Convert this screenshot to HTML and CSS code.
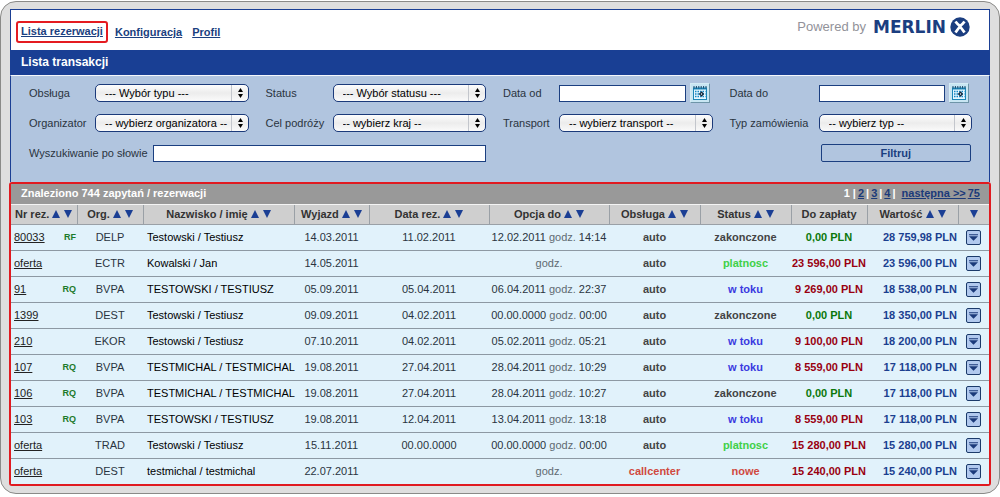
FILE: index.html
```html
<!DOCTYPE html>
<html lang="pl">
<head>
<meta charset="utf-8">
<title>Lista transakcji</title>
<link rel="stylesheet" href="styles.css">
</head>
<body>
<svg class="defs" aria-hidden="true">
  <symbol id="sort" viewBox="0 0 20 8"><path d="M4 0L8 8H0zM12 0h8l-4 8z"/></symbol>
  <symbol id="down" viewBox="0 0 8 8"><path d="M0 0h8L4 8z"/></symbol>
  <symbol id="updown" viewBox="0 0 5 10"><path d="M2.5 0L5 4H0zM0 6h5l-2.500 4z"/></symbol>
  <symbol id="expand" viewBox="0 0 10 7"><path d="M0 0h10v1H0zM0 2h10L5 7z"/></symbol>
  <symbol id="calendar" viewBox="0 0 16 16">
    <rect x="1" y="2.500" width="14" height="12.500" fill="#1b86b8"/>
    <path d="M2 1v2.500M4.400 1v2.500M6.800 1v2.500M9.200 1v2.500M11.600 1v2.500M14 1v2.500" stroke="#17486b" stroke-width="1"/>
    <rect x="2" y="4.500" width="12" height="9.500" fill="#e6f7ff"/>
    <path d="M3 6.500h10.500M3 9h10.500M3 11.500h10.500" stroke="#1487c4" stroke-width="1.500" stroke-dasharray="1.500 1"/>
    <path d="M9.500 6.300L12.200 9l-2.700 2.700L6.800 9z" fill="#12283c"/><circle cx="9.500" cy="9" r=".7" fill="#fff"/>
  </symbol>
</svg>
<div class="frame">
  <header class="top">
    <nav class="nav">
      <a class="nav-link current" href="#">Lista rezerwacji</a>
      <a class="nav-link" href="#">Konfiguracja</a>
      <a class="nav-link" href="#">Profil</a>
    </nav>
    <div class="brand">
      <span class="powered">Powered by</span>
      <span class="logo">MERLIN</span>
      <svg class="logo-mark" viewBox="0 0 20 20" aria-hidden="true"><circle cx="10" cy="10" r="9.700" fill="#1b3e80"/><path d="M5.500 4.500Q8 8 10 9Q12 8 14.500 4.500M5.500 15.500Q8 12 10 9.500Q12 12 14.500 15.500" fill="none" stroke="#fff" stroke-width="2.800"/></svg>
    </div>
  </header>
  <h1 class="title">Lista transakcji</h1>
  <form class="filters">
    <label for="typ">Obsługa</label>
    <div class="select"><select id="typ"><option>--- Wybór typu ---</option></select><svg><use href="#updown"/></svg></div>
    <label for="status">Status</label>
    <div class="select"><select id="status"><option>--- Wybór statusu ---</option></select><svg><use href="#updown"/></svg></div>
    <label for="od">Data od</label>
    <div class="date"><input class="text" id="od" type="text"><button class="cal" type="button" aria-label="Kalendarz"><svg><use href="#calendar"/></svg></button></div>
    <label for="do">Data do</label>
    <div class="date"><input class="text" id="do" type="text"><button class="cal" type="button" aria-label="Kalendarz"><svg><use href="#calendar"/></svg></button></div>

    <label for="org">Organizator</label>
    <div class="select"><select id="org"><option>-- wybierz organizatora --</option></select><svg><use href="#updown"/></svg></div>
    <label for="kraj">Cel podróży</label>
    <div class="select"><select id="kraj"><option>-- wybierz kraj --</option></select><svg><use href="#updown"/></svg></div>
    <label for="transport">Transport</label>
    <div class="select"><select id="transport"><option>-- wybierz transport --</option></select><svg><use href="#updown"/></svg></div>
    <label for="zam">Typ zamówienia</label>
    <div class="select"><select id="zam"><option>-- wybierz typ --</option></select><svg><use href="#updown"/></svg></div>

    <div class="search"><label for="slowo">Wyszukiwanie po słowie</label><input class="text" id="slowo" type="text"></div>
    <button class="submit" type="submit">Filtruj</button>
  </form>
  <section class="results">
    <div class="bar">
      <h2 class="found">Znaleziono 744 zapytań / rezerwacji</h2>
      <nav class="pages"><span>1 |</span> <a href="#">2</a><span>|</span><a href="#">3</a><span>|</span><a href="#">4</a><span>|</span> <a class="next" href="#">następna &gt;&gt;</a> <a href="#">75</a></nav>
    </div>
    <table class="list">
      <colgroup><col class="c-nr"><col class="c-org"><col class="c-name"><col class="c-dep"><col class="c-date"><col class="c-date"><col class="c-state"><col class="c-state"><col class="c-pay"><col class="c-state"><col class="c-more"></colgroup>
      <thead>
        <tr><th>Nr rez. <svg class="sort"><use href="#sort"/></svg></th><th>Org. <svg class="sort"><use href="#sort"/></svg></th><th>Nazwisko / imię <svg class="sort"><use href="#sort"/></svg></th><th>Wyjazd <svg class="sort"><use href="#sort"/></svg></th><th>Data rez. <svg class="sort"><use href="#sort"/></svg></th><th>Opcja do <svg class="sort"><use href="#sort"/></svg></th><th>Obsługa <svg class="sort"><use href="#sort"/></svg></th><th>Status <svg class="sort"><use href="#sort"/></svg></th><th>Do zapłaty</th><th>Wartość <svg class="sort"><use href="#sort"/></svg></th><th><svg class="down"><use href="#down"/></svg></th></tr>
      </thead>
      <tbody>
        <tr><td class="nr"><a href="#">80033</a><b class="flag">RF</b></td><td>DELP</td><td class="name">Testowski / Testiusz</td><td>14.03.2011</td><td>11.02.2011</td><td>12.02.2011 <i>godz.</i> 14:14</td><td class="bold">auto</td><td class="bold">zakonczone</td><td class="bold paid">0,00 PLN</td><td class="value">28 759,98 PLN</td><td><button class="more" aria-label="Więcej"><svg><use href="#expand"/></svg></button></td></tr>
        <tr><td class="nr"><a href="#">oferta</a></td><td>ECTR</td><td class="name">Kowalski / Jan</td><td>14.05.2011</td><td></td><td><i>godz.</i></td><td class="bold">auto</td><td class="bold payable">platnosc</td><td class="bold due">23 596,00 PLN</td><td class="value">23 596,00 PLN</td><td><button class="more" aria-label="Więcej"><svg><use href="#expand"/></svg></button></td></tr>
        <tr><td class="nr"><a href="#">91</a><b class="flag">RQ</b></td><td>BVPA</td><td class="name">TESTOWSKI / TESTIUSZ</td><td>05.09.2011</td><td>05.04.2011</td><td>06.04.2011 <i>godz.</i> 22:37</td><td class="bold">auto</td><td class="bold open">w toku</td><td class="bold due">9 269,00 PLN</td><td class="value">18 538,00 PLN</td><td><button class="more" aria-label="Więcej"><svg><use href="#expand"/></svg></button></td></tr>
        <tr><td class="nr"><a href="#">1399</a></td><td>DEST</td><td class="name">Testowski / Testiusz</td><td>09.09.2011</td><td>04.02.2011</td><td>00.00.0000 <i>godz.</i> 00:00</td><td class="bold">auto</td><td class="bold">zakonczone</td><td class="bold paid">0,00 PLN</td><td class="value">18 350,00 PLN</td><td><button class="more" aria-label="Więcej"><svg><use href="#expand"/></svg></button></td></tr>
        <tr><td class="nr"><a href="#">210</a></td><td>EKOR</td><td class="name">Testowski / Testiusz</td><td>07.10.2011</td><td>04.02.2011</td><td>05.02.2011 <i>godz.</i> 05:21</td><td class="bold">auto</td><td class="bold open">w toku</td><td class="bold due">9 100,00 PLN</td><td class="value">18 200,00 PLN</td><td><button class="more" aria-label="Więcej"><svg><use href="#expand"/></svg></button></td></tr>
        <tr><td class="nr"><a href="#">107</a><b class="flag">RQ</b></td><td>BVPA</td><td class="name">TESTMICHAL / TESTMICHAL</td><td>19.08.2011</td><td>27.04.2011</td><td>28.04.2011 <i>godz.</i> 10:29</td><td class="bold">auto</td><td class="bold open">w toku</td><td class="bold due">8 559,00 PLN</td><td class="value">17 118,00 PLN</td><td><button class="more" aria-label="Więcej"><svg><use href="#expand"/></svg></button></td></tr>
        <tr><td class="nr"><a href="#">106</a><b class="flag">RQ</b></td><td>BVPA</td><td class="name">TESTMICHAL / TESTMICHAL</td><td>19.08.2011</td><td>27.04.2011</td><td>28.04.2011 <i>godz.</i> 10:27</td><td class="bold">auto</td><td class="bold">zakonczone</td><td class="bold paid">0,00 PLN</td><td class="value">17 118,00 PLN</td><td><button class="more" aria-label="Więcej"><svg><use href="#expand"/></svg></button></td></tr>
        <tr><td class="nr"><a href="#">103</a><b class="flag">RQ</b></td><td>BVPA</td><td class="name">TESTOWSKI / TESTIUSZ</td><td>19.08.2011</td><td>12.04.2011</td><td>13.04.2011 <i>godz.</i> 13:18</td><td class="bold">auto</td><td class="bold open">w toku</td><td class="bold due">8 559,00 PLN</td><td class="value">17 118,00 PLN</td><td><button class="more" aria-label="Więcej"><svg><use href="#expand"/></svg></button></td></tr>
        <tr><td class="nr"><a href="#">oferta</a></td><td>TRAD</td><td class="name">Testowski / Testiusz</td><td>15.11.2011</td><td>00.00.0000</td><td>00.00.0000 <i>godz.</i> 00:00</td><td class="bold">auto</td><td class="bold payable">platnosc</td><td class="bold due">15 280,00 PLN</td><td class="value">15 280,00 PLN</td><td><button class="more" aria-label="Więcej"><svg><use href="#expand"/></svg></button></td></tr>
        <tr><td class="nr"><a href="#">oferta</a></td><td>DEST</td><td class="name">testmichal / testmichal</td><td>22.07.2011</td><td></td><td><i>godz.</i></td><td class="bold new">callcenter</td><td class="bold new">nowe</td><td class="bold due">15 240,00 PLN</td><td class="value">15 240,00 PLN</td><td><button class="more" aria-label="Więcej"><svg><use href="#expand"/></svg></button></td></tr>
      </tbody>
    </table>
  </section>
</div>
</body>
</html>
```
FILE: styles.css
```css
* { box-sizing: border-box; }
body {
  margin: 0;
  padding-top: 1px;
  background: #fff;
  color: #2a3440;
  font: 11px/14px "Liberation Sans", Arial, sans-serif;
}
svg { display: block; fill: currentColor; }
.defs { display: none; }
button, input, select { font: inherit; margin: 0; }

.frame {
  padding: 7px 9px;
  border: 1px solid #8a8a88;
  border-radius: 16px;
  background: #dedede;
}
.top {
  display: flex;
  justify-content: space-between;
  align-items: center;
  height: 41px;
  padding: 4px 19px 0 5px;
  border: 1px solid #1b3f94;
  border-bottom: 0;
  background: #fff;
}
.nav { display: flex; gap: 4px; font-weight: bold; }
.nav-link { padding: 2px 3px; border: 2px solid transparent; border-radius: 3px; color: #1b3f80; white-space: nowrap; }
.nav-link + .nav-link { padding: 2px 1px; }
.nav-link.current { padding: 1px 3px 2px; border-color: #e41b20; }
.brand { display: flex; align-items: center; padding-bottom: 10px; }
.powered { margin-right: 7px; color: #929299; font-size: 13px; }
.logo { margin-right: 4px; color: #1b3e80; font: bold 17px/20px "DejaVu Sans", sans-serif; }
.logo-mark { width: 20px; height: 20px; }
.title {
  margin: 0;
  padding: 5px 11px 6px;
  background: #193f94;
  color: #fff;
  font-size: 12px;
  line-height: 14px;
}

.filters {
  display: grid;
  grid-template-columns: 66px minmax(0, 1fr) 67px minmax(0, 1fr) 56px minmax(0, 1fr) 89px minmax(0, 1fr);
  grid-auto-rows: 18px;
  row-gap: 12px;
  align-items: center;
  padding: 8px 0 20px 18px;
  border: 1px solid #1b3f94;
  border-top-color: #f3f7fb;
  border-bottom: 0;
  background: #b1c5df;
}
.filters label { white-space: nowrap; }
.select { position: relative; margin-right: 17px; color: #000; }
.select select {
  display: block;
  width: 100%;
  height: 18px;
  padding: 0 20px 1px 9px;
  border: 1px solid #1b3a7a;
  border-radius: 5px;
  appearance: none;
  background: linear-gradient(90deg, transparent calc(100% - 17px), #c3c6cc calc(100% - 17px), #c3c6cc calc(100% - 16px), transparent calc(100% - 16px)), linear-gradient(#fdfdfd, #ececec 50%, #fafafa);
  color: #000;
}
.select svg { position: absolute; right: 6px; top: 4px; width: 5px; height: 10px; pointer-events: none; }
.text { min-width: 0; height: 17px; padding: 0 3px; border: 1px solid #1b3f80; background: #fff; }
.date { display: flex; align-items: center; gap: 4px; margin-right: 20px; }
.date .text { flex: 1; }
.cal {
  width: 20px;
  height: 20px;
  padding: 1px;
  border: 1px solid #92b4c4;
  border-color: #d5ecf5 #6e95a8 #6e95a8 #d5ecf5;
  background: #c8e6f3;
}
.cal svg { width: 16px; height: 16px; }
.search { grid-column: 1 / 5; display: flex; align-items: center; gap: 5px; margin-right: 17px; }
.search .text { flex: 1; }
.submit {
  grid-column: 8;
  height: 18px;
  margin: 0 18px 0 2px;
  padding: 0 0 1px;
  border: 1px solid #1b3f80;
  border-radius: 2px;
  background: #b1c5df;
  color: #1b3f80;
  font-weight: bold;
}

.results {
  margin: 0 -1px;
  border: 2px solid #e01a20;
  border-radius: 3px;
}
.bar {
  display: flex;
  justify-content: space-between;
  padding: 2px 9px 4px 10px;
  border-bottom: 1px solid #f4f4f4;
  background: #999;
  color: #fff;
  font-weight: bold;
}
.found { margin: 0; font: inherit; }
.pages { display: flex; gap: 2px; }
.pages a { color: #1b3a7a; }
.next { margin-left: 4px; }

.list { width: 100%; border-collapse: collapse; table-layout: fixed; background: #e1f2fb; }
.c-nr { width: 66px; }
.c-org { width: 66px; }
.c-dep { width: 75px; }
.c-date { width: 120px; }
.c-state { width: 91px; }
.c-pay { width: 76px; }
.c-more { width: 31px; }
.list th {
  height: 19px;
  padding: 0 1px;
  border: 1px solid #9aa0a6;
  border-width: 0 1px 1px 0;
  background: #cfcfcf;
  color: #333;
  white-space: nowrap;
}
.list th:last-child { border-right: 0; }
.list td {
  height: 26px;
  padding: 0 1px;
  border-bottom: 1px solid #8d99a3;
  text-align: center;
  white-space: nowrap;
}
.list tr:last-child td { border-bottom: 0; }
.sort { display: inline-block; width: 20px; height: 8px; color: #1b3f94; }
.down { width: 8px; height: 8px; margin: 0 auto; color: #1b3f94; }
.list .nr { padding: 0 1px 0 3px; text-align: left; }
.nr a { color: #222; }
.flag { float: right; color: #1c7a2a; font-size: 9px; }
.list .name { padding-left: 4px; color: #000; text-align: left; }
.list i { color: #606a72; font-style: normal; }
.bold { color: #444; font-weight: bold; }
.bold.payable { color: #3fd048; }
.bold.open { color: #3a3ae0; }
.bold.new { color: #d0493f; }
.bold.paid { color: #0b780b; }
.bold.due { color: #990010; }
.list .value { color: #1b3f90; font-weight: bold; text-align: right; }
.more {
  display: block;
  width: 15px;
  height: 15px;
  margin: 0 auto;
  padding: 2px;
  border: 1px solid #1b3a6a;
  border-radius: 2px;
  background: #b1c9ee;
  color: #1b3a7a;
}
.more svg { width: 9px; height: 7px; }
```
